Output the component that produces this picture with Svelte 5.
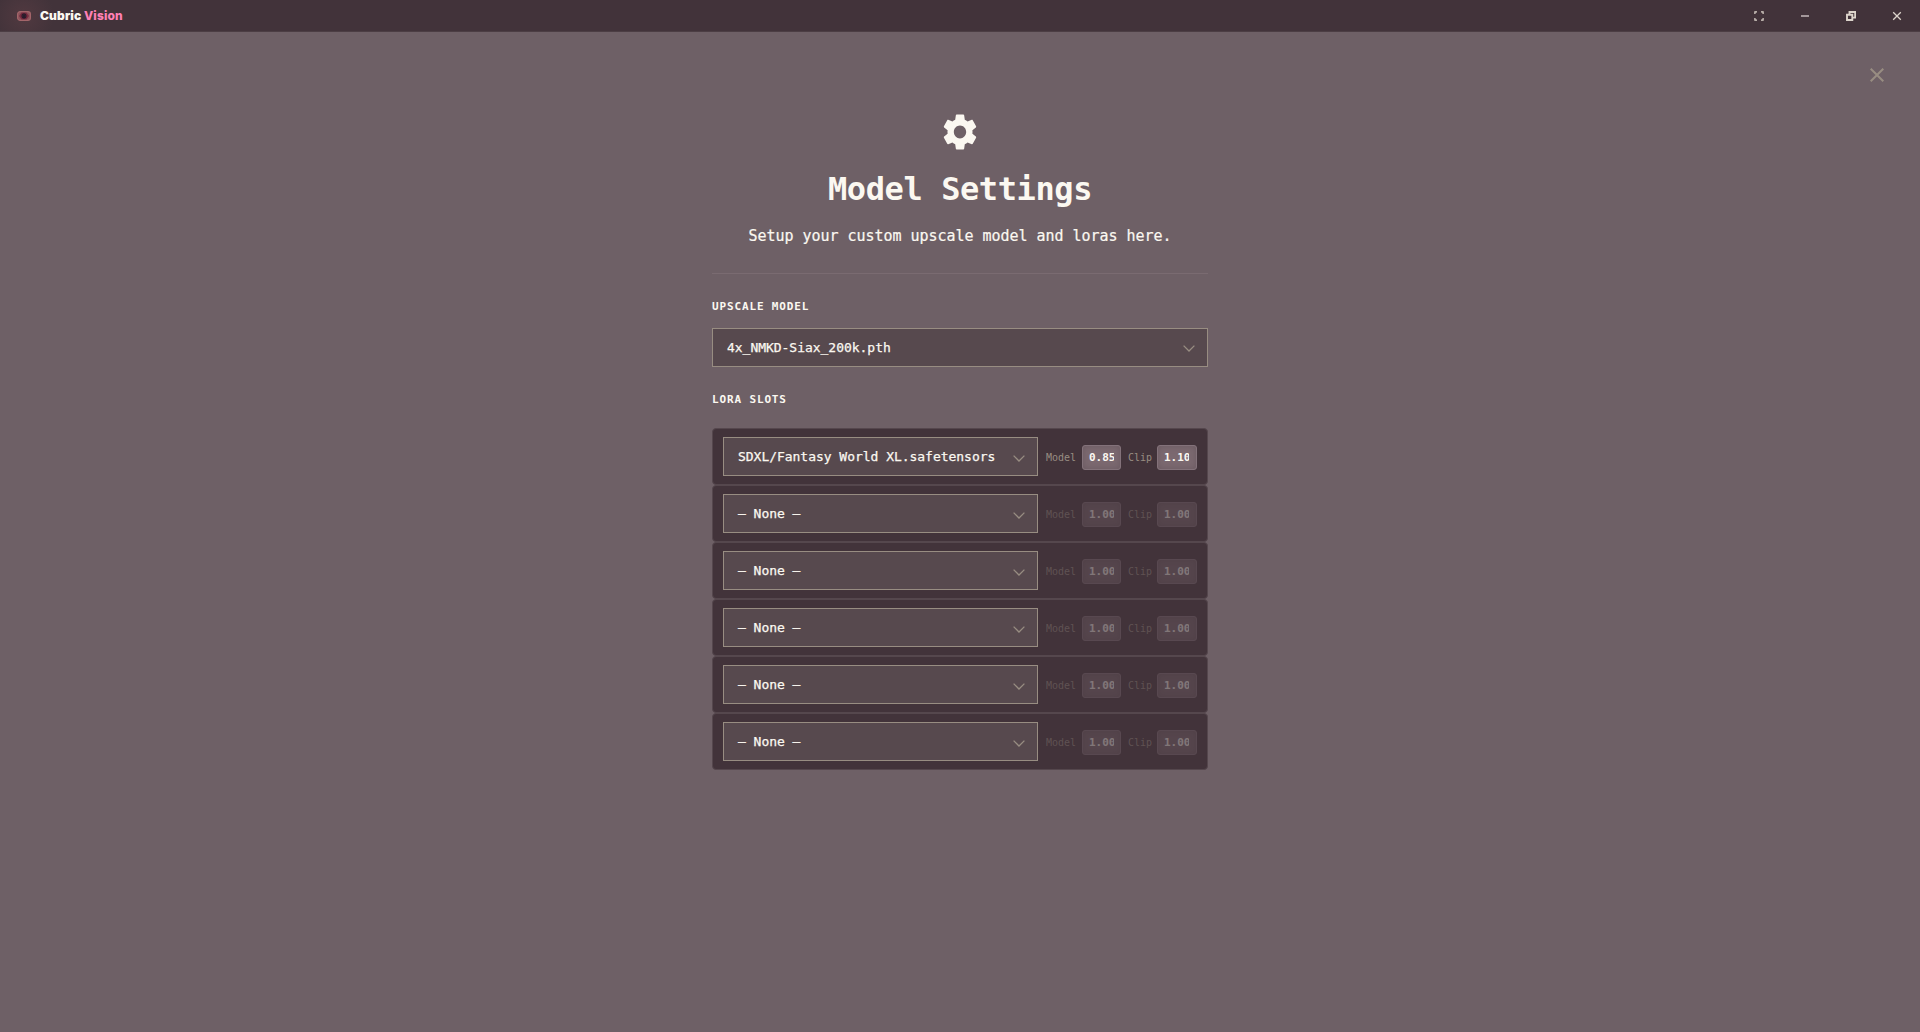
<script>
  const slots = $state([
    { name: 'SDXL/Fantasy World XL.safetensors', model: '0.85', clip: '1.10', active: true },
    ...Array.from({ length: 5 }, () => ({ name: '— None —', model: '1.00', clip: '1.00', active: false }))
  ]);
</script>

{#snippet chevron()}
  <svg class="chevron" viewBox="0 0 12 7" width="12" height="7"><path d="M.6.6 6 6 11.4.6" /></svg>
{/snippet}

<div class="app">
  <header>
    <div class="brand">
      <svg class="logo" viewBox="0 0 16 12" width="16" height="12">
        <rect x="1.6" y="1.6" width="12.8" height="8.8" rx="2.6" fill="#8a535a" stroke="#a3656a" stroke-width="1.2" />
        <path d="M3 6 5.5 2.5h5L13 6l-2.500 3.500h-5z" fill="#7a2b40" />
        <path d="M8 3v6M5 6h6M6 4l4 4M10 4 6 8" stroke="#281c2b" stroke-width="1.2" />
      </svg>
      <span class="name">Cubric <b>Vision</b></span>
    </div>
    <div class="controls">
      <button aria-label="Full screen"><svg viewBox="0 0 10 10" width="10" height="10"><path d="M.9 3V.9H3M7 .9h2.1V3M9.100 7v2.100H7M3 9.100H.9V7" stroke-width="1.200" /></svg></button>
      <button aria-label="Minimize"><svg viewBox="0 0 10 10" width="10" height="10"><path d="M1 5h8" stroke="#a3979a" stroke-width="2" /></svg></button>
      <button aria-label="Restore"><svg viewBox="0 0 10 10" width="10" height="10"><path d="M3.500 3V1h5.700v5.600H7M1 3.700h5.300V9H1z" stroke-width="1.900" /></svg></button>
      <button aria-label="Close"><svg viewBox="0 0 10 10" width="10" height="10"><path d="m1.200 1.200 7.600 7.600M8.800 1.200 1.200 8.800" stroke-width="1.300" /></svg></button>
    </div>
  </header>

  <main>
    <div class="dismiss-row">
      <button class="dismiss" aria-label="Close settings"><svg viewBox="0 0 14 14" width="14" height="14"><path d="m.7.7 12.600 12.600M13.300.7.7 13.300" /></svg></button>
    </div>
    <div class="panel">
      <div class="intro">
        <svg class="gear" viewBox="0 0 24 24" width="40" height="42" preserveAspectRatio="none"><path d="M19.43 12.98c.04-.32.07-.64.07-.98s-.03-.66-.07-.98l2.11-1.65c.19-.15.24-.42.12-.64l-2-3.46c-.12-.22-.39-.3-.61-.22l-2.49 1c-.52-.4-1.08-.73-1.69-.98l-.38-2.65C14.46 2.18 14.25 2 14 2h-4c-.25 0-.46.18-.49.42l-.38 2.65c-.61.25-1.17.59-1.69.98l-2.49-1c-.23-.09-.49 0-.61.22l-2 3.46c-.13.22-.07.49.12.64l2.11 1.65c-.04.32-.07.65-.07.98s.03.66.07.98l-2.11 1.65c-.19.15-.24.42-.12.64l2 3.46c.12.22.39.3.61.22l2.49-1c.52.4 1.08.73 1.69.98l.38 2.65c.03.24.24.42.49.42h4c.25 0 .46-.18.49-.42l.38-2.65c.61-.25 1.17-.59 1.69-.98l2.49 1c.23.09.49 0 .61-.22l2-3.46c.12-.22.07-.49-.12-.64l-2.11-1.65zM12 15.7c-2.04 0-3.7-1.66-3.7-3.7s1.66-3.7 3.7-3.7 3.7 1.66 3.7 3.7-1.66 3.700-3.700 3.700z" /></svg>
        <h1>Model Settings</h1>
        <p>Setup your custom upscale model and loras here.</p>
      </div>

      <h2>Upscale model</h2>
      <div class="select"><span>4x_NMKD-Siax_200k.pth</span>{@render chevron()}</div>

      <h2 class="slots-title">Lora slots</h2>
      <div class="slots">
        {#each slots as slot}
          <div class="slot">
            <div class="select"><span>{slot.name}</span>{@render chevron()}</div>
            <div class="weights" class:off={!slot.active}>
              <span class="label">Model</span>
              <div class="value"><span>{slot.model}</span></div>
              <span class="label clip">Clip</span>
              <div class="value last"><span>{slot.clip}</span></div>
            </div>
          </div>
        {/each}
      </div>
    </div>
  </main>
</div>

<style>
  :global(body) { background: #6e6066; }
  * { box-sizing: border-box; }
  .app { height: 1032px; display: flex; flex-direction: column; color: #fbf8f1; font-family: "DejaVu Sans Mono", monospace; background: #6e6066; }
  header { height: 32px; flex: none; display: flex; justify-content: space-between; background: #42333a; border-bottom: 1px solid #4c3e44; }
  .brand { display: flex; align-items: center; gap: 8px; padding-left: 16px; background: radial-gradient(circle at 24px 16px, #513940, transparent 30px); }
  .name { font: 900 12px/16px Inter, sans-serif; letter-spacing: 0.15px; white-space: pre; color: #fbf8f1; }
  .name b { font-weight: 800; color: #ff80b5; }
  .controls { display: flex; }
  button { padding: 0; border: 0; background: none; display: flex; align-items: center; justify-content: center; }
  .controls button { width: 46px; height: 31px; }
  button svg { fill: none; stroke: #ddd5cc; }
  main { flex: 1; display: flex; flex-direction: column; }
  .dismiss-row { display: flex; justify-content: flex-end; padding: 27px 27px 0 0; }
  .dismiss { width: 32px; height: 32px; }
  .dismiss svg { stroke: #988d82; stroke-width: 2; }
  .panel { width: 496px; margin: 0 auto; padding-top: 20px; }
  .intro { height: 163px; display: flex; flex-direction: column; align-items: center; border-bottom: 1px solid #7a6b71; }
  .gear { fill: #fbf8f1; flex: none; }
  h1 { margin: 16px 0 0; font-size: 32px; line-height: 40px; letter-spacing: -0.4px; white-space: nowrap; }
  p { margin: 14px 0 0; font-size: 15px; line-height: 26px; letter-spacing: -0.03px; white-space: nowrap; -webkit-text-stroke: 0.2px; }
  h2 { margin: 25px 0 0; font-size: 11px; line-height: 16px; letter-spacing: 0.86px; text-transform: uppercase; }
  .panel > .select { margin-top: 13px; }
  .select { height: 39px; display: flex; align-items: center; justify-content: space-between; border: 1px solid #988d82; background: #57494e; padding: 0 12px 0 14px; font-size: 13px; line-height: 20px; letter-spacing: -0.03px; white-space: nowrap; -webkit-text-stroke: 0.25px; }
  .chevron { margin-top: 2px; fill: none; stroke: #988d82; stroke-width: 1.3; }
  .slot .chevron { margin-top: 3px; }
  .slots-title { margin-top: 25px; }
  .slots { margin-top: 20px; }
  .slot { height: 57px; display: flex; align-items: center; padding: 0 10px; border: 1px solid #55474d; border-radius: 4px; background: #42333a; }
  .slot .select { width: 315px; }
  .weights { flex: 1; display: flex; align-items: center; padding: 2px 0 0 8px; }
  .off { opacity: 0.34; }
  .label { width: 36px; font-size: 10px; line-height: 14px; color: #988d82; }
  .clip { width: 29px; margin-left: 7px; }
  .value { width: 39px; height: 25px; padding: 0 6px; display: flex; align-items: center; border: 1px solid #83727a; border-radius: 3px; background: #7b6970; box-shadow: inset 0 0 6px #6b5a61; font-size: 11px; font-weight: 700; }
  .value span { overflow: hidden; width: 25px; }
  .last { width: 40px; }
</style>
